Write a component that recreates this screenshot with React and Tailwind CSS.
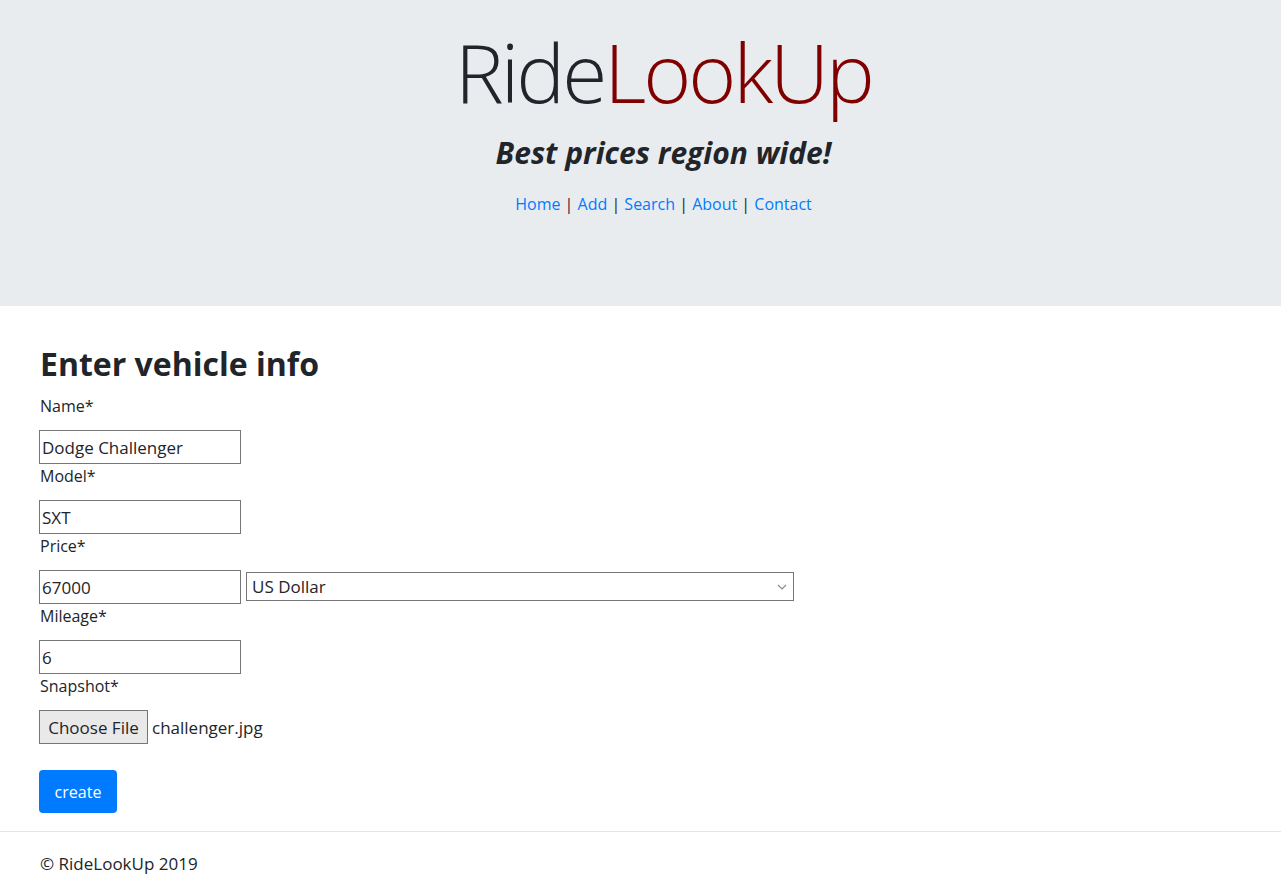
import React from "react";

export default function App() {
  const font = { fontFamily: '"Open Sans", "Noto Sans", "Liberation Sans", sans-serif' };
  return (
    <div className="min-h-[892px] bg-white text-[#212529]" style={font}>
      <header className="h-[306px] bg-[#e9ecef] flex flex-col items-center pt-[22px] pl-[46px]">
        <h1 className="text-[82px] leading-[98.4px] font-light tracking-[-3px]">
          <span className="text-[#212529]">Ride</span>
          <span className="text-[#800000]">LookUp</span>
        </h1>
        <p className="mt-[14px] text-[30px] leading-[38.4px] font-bold italic">Best prices region wide!</p>
        <nav className="mt-[19px] text-[16px] leading-6">
          <a className="text-[#007bff]">Home</a> | <a className="text-[#007bff]">Add</a> |{" "}
          <a className="text-[#007bff]">Search</a> | <a className="text-[#007bff]">About</a> |{" "}
          <a className="text-[#007bff]">Contact</a>
        </nav>
      </header>

      <main className="px-[40px] pt-[39px]">
        <h2 className="text-[32px] leading-[38.4px] font-bold">Enter vehicle info</h2>
        <div className="mt-[11px] text-[16px]">
          <Field label="Name*" value="Dodge Challenger" />
          <Field label="Model*" value="SXT" />
          <div className="h-[70px]">
            <div className="leading-6">Price*</div>
            <div className="mt-[12px] -ml-px flex items-start gap-[5px]">
              <div className="w-[202px] h-[34px] border border-[#767676] flex items-center px-[2px] text-[17px]">67000</div>
              <div className="mt-[2px] w-[548px] h-[29px] border border-[#767676] flex items-center justify-between pl-[5px] pr-[6px] text-[17px]">
                <span>US Dollar</span>
                <svg width="10" height="6" viewBox="0 0 10 6" fill="none" stroke="#8a8a8a" strokeWidth="1.2">
                  <path d="M1 1l4 4 4-4" />
                </svg>
              </div>
            </div>
          </div>
          <Field label="Mileage*" value="6" />
          <div className="h-[70px]">
            <div className="leading-6">Snapshot*</div>
            <div className="mt-[12px] -ml-px flex items-center gap-[4px]">
              <div className="w-[109px] h-[34px] border border-[#767676] bg-[#e9e9e9] flex items-center justify-center text-[17px]">Choose File</div>
              <span className="text-[17px]">challenger.jpg</span>
            </div>
          </div>
          <button className="mt-[26px] -ml-px w-[78px] h-[43px] rounded-[4px] bg-[#007bff] text-white text-[16px] flex items-center justify-center">
            create
          </button>
        </div>
      </main>
      <div className="mt-[18px] border-t border-[#e5e5e5]" />
      <footer className="px-[40px] pt-[20px] text-[17px] leading-6">© RideLookUp 2019</footer>
    </div>
  );
}

function Field({ label, value }) {
  return (
    <div className="h-[70px]">
      <div className="leading-6">{label}</div>
      <div className="mt-[12px] -ml-px w-[202px] h-[34px] border border-[#767676] flex items-center px-[2px] text-[17px]">{value}</div>
    </div>
  );
}
